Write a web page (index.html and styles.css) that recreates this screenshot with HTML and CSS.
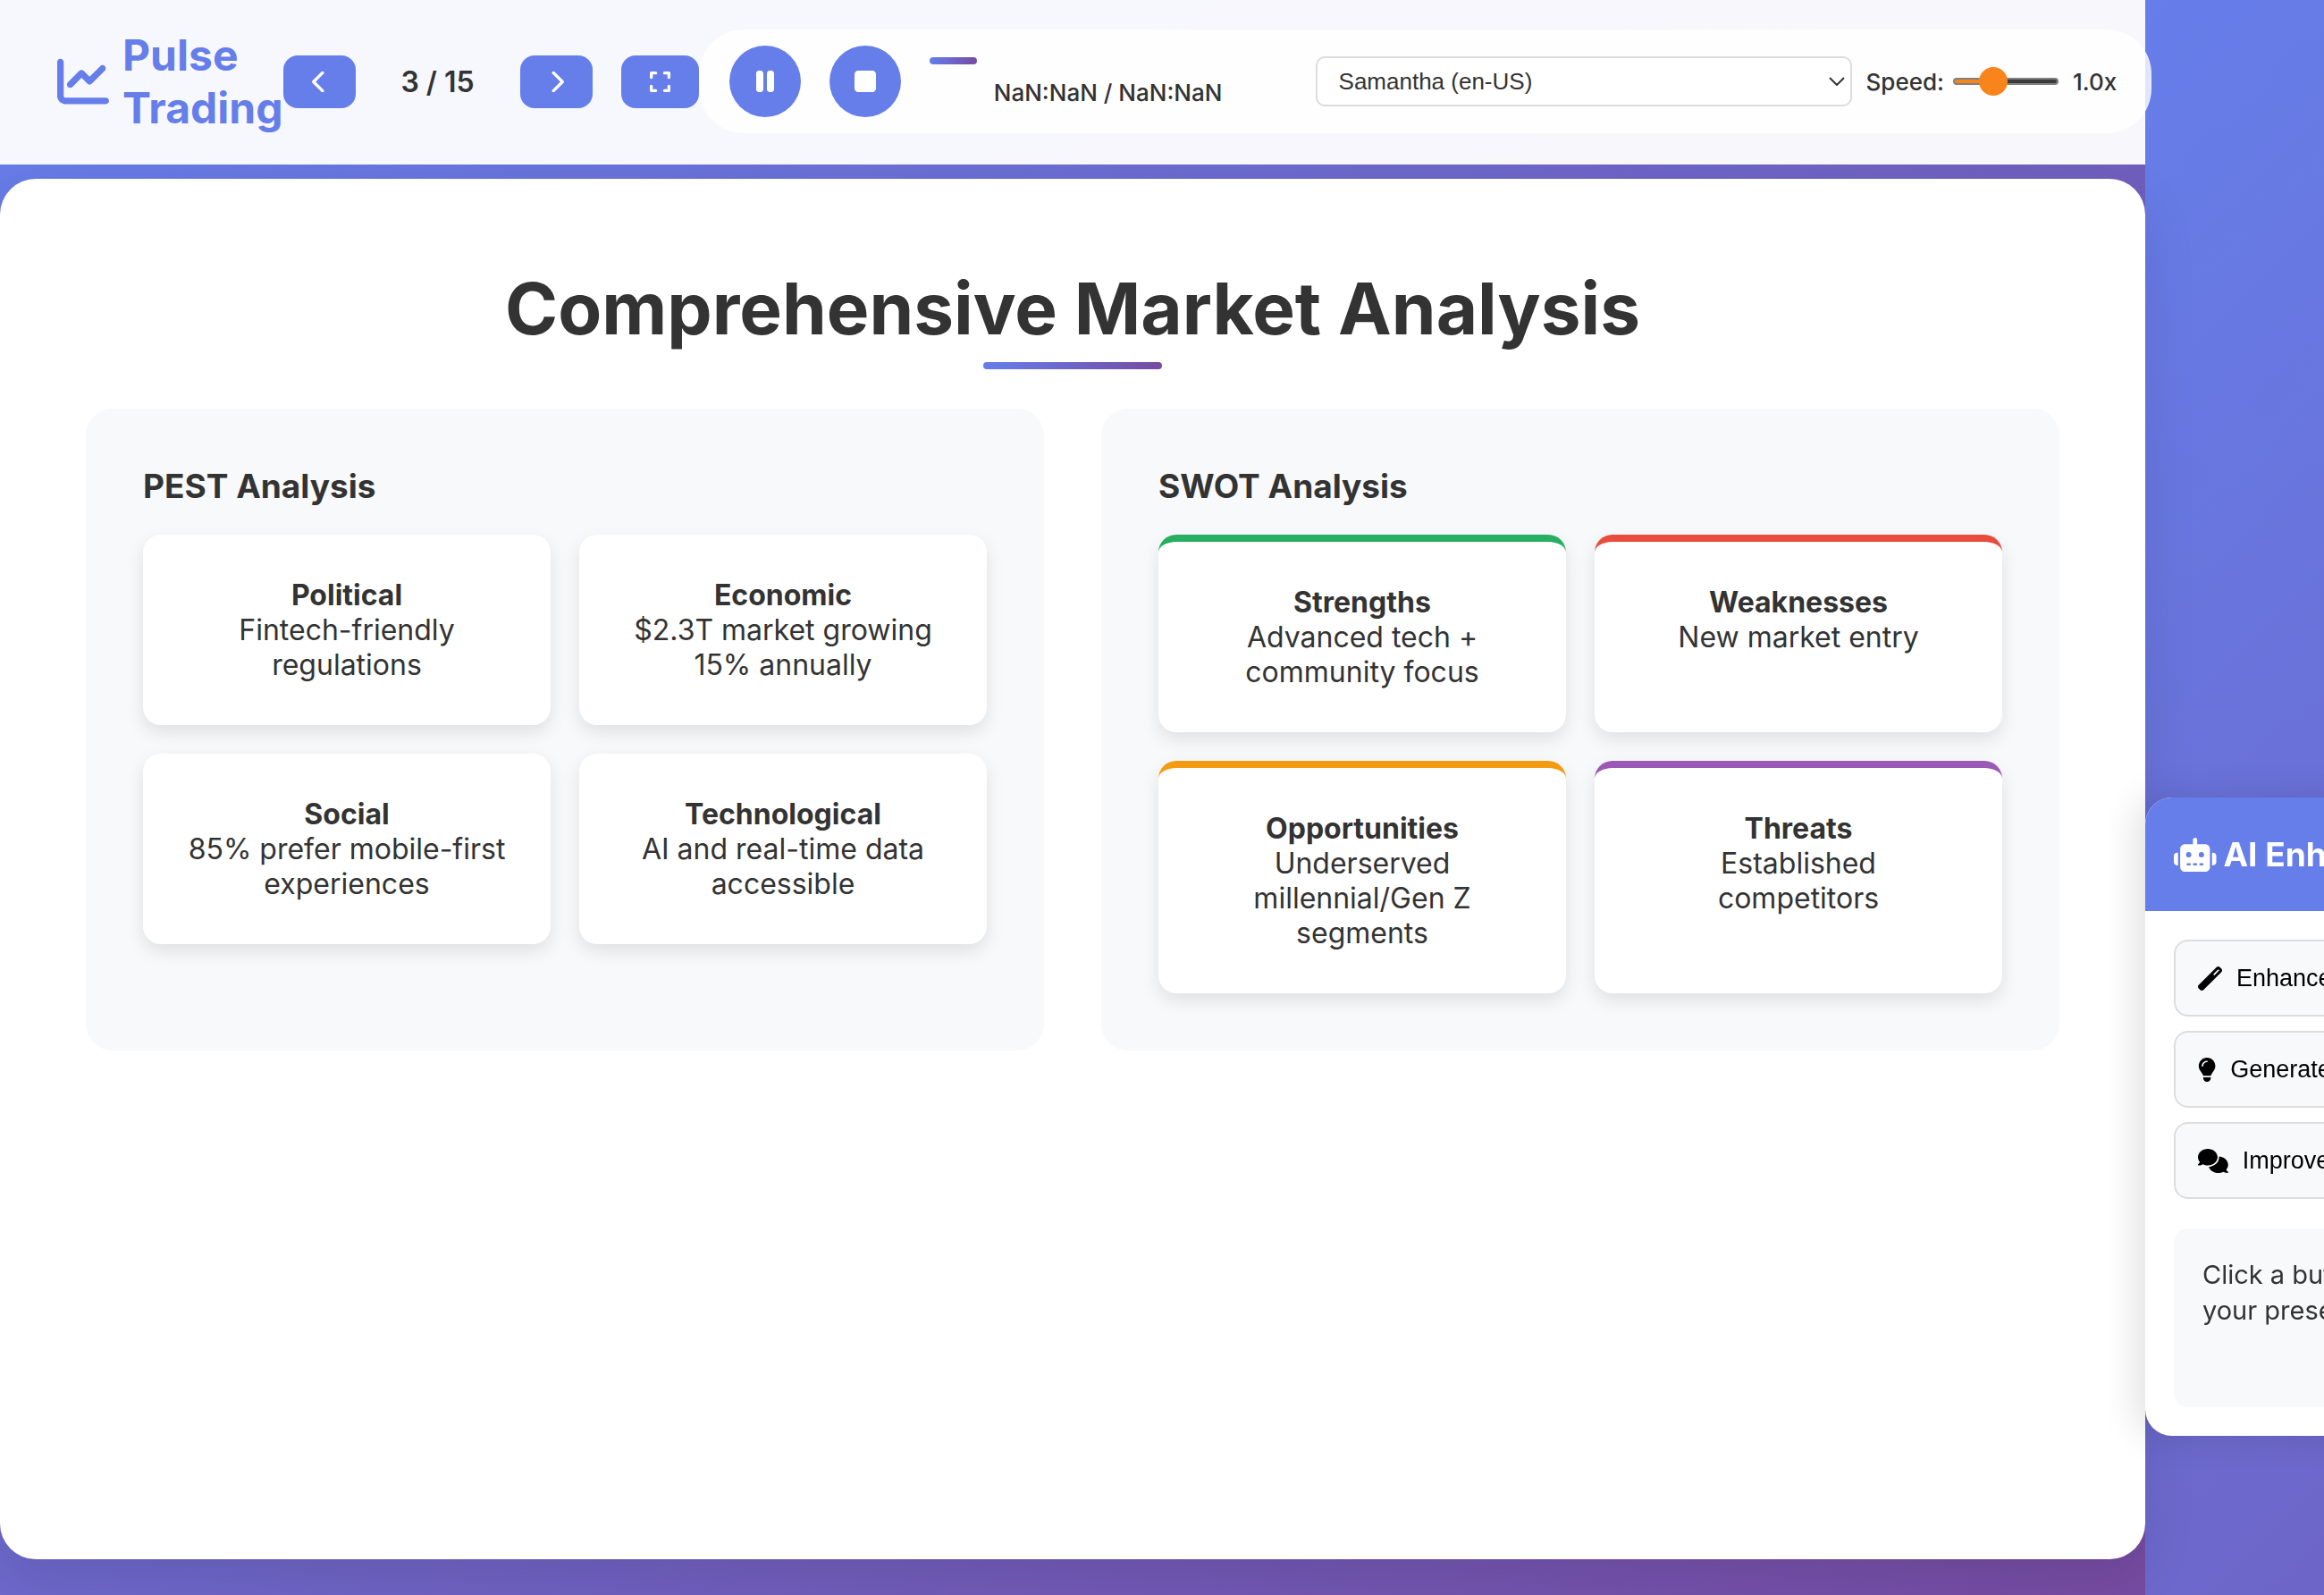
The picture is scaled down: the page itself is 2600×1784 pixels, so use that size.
FILE: index.html
```html
<!DOCTYPE html>
<html lang="en">
<head>
<meta charset="utf-8">
<title>Pulse Trading</title>
<link rel="stylesheet" href="styles.css">
</head>
<body>
<div class="app">
  <header class="topbar">
    <div class="logo">
      <svg class="logo-icon" viewBox="0 0 512 512" aria-hidden="true"><path d="M64 64c0-17.7-14.3-32-32-32S0 46.3 0 64V400c0 44.2 35.8 80 80 80H480c17.7 0 32-14.3 32-32s-14.3-32-32-32H80c-8.8 0-16-7.2-16-16V64zm406.6 86.6c12.5-12.5 12.5-32.8 0-45.3s-32.8-12.5-45.3 0L320 210.7l-57.4-57.4c-12.5-12.5-32.8-12.5-45.3 0l-112 112c-12.5 12.5-12.5 32.8 0 45.3s32.8 12.5 45.3 0L240 221.3l57.4 57.4c12.5 12.5 32.8 12.5 45.3 0l128-128z"/></svg>
      <span>Pulse Trading</span>
    </div>
    <nav class="slide-nav">
      <button class="nav-btn" type="button" aria-label="Previous slide"><svg class="icon icon-narrow" viewBox="0 0 320 512"><path d="M9.4 233.4c-12.5 12.5-12.5 32.8 0 45.3l192 192c12.5 12.5 32.8 12.5 45.3 0s12.5-32.8 0-45.3L77.3 256 246.6 86.6c12.5-12.5 12.5-32.8 0-45.3s-32.8-12.5-45.3 0l-192 192z"/></svg></button>
      <span class="counter">3 / 15</span>
      <button class="nav-btn" type="button" aria-label="Next slide"><svg class="icon icon-narrow" viewBox="0 0 320 512"><path d="M310.6 233.4c12.5 12.5 12.5 32.8 0 45.3l-192 192c-12.5 12.5-32.8 12.5-45.3 0s-12.5-32.8 0-45.3L242.7 256 73.4 86.6c-12.5-12.5-12.5-32.8 0-45.3s32.8-12.5 45.3 0l192 192z"/></svg></button>
      <button class="nav-btn" type="button" aria-label="Fullscreen"><svg class="icon icon-expand" viewBox="0 0 448 512"><path d="M32 32C14.3 32 0 46.3 0 64v96c0 17.7 14.3 32 32 32s32-14.3 32-32V96h64c17.7 0 32-14.3 32-32s-14.3-32-32-32H32zM64 352c0-17.7-14.3-32-32-32s-32 14.3-32 32v96c0 17.7 14.3 32 32 32h96c17.7 0 32-14.3 32-32s-14.3-32-32-32H64V352zM320 32c-17.7 0-32 14.3-32 32s14.3 32 32 32h64v64c0 17.7 14.3 32 32 32s32-14.3 32-32V64c0-17.7-14.3-32-32-32H320zM448 352c0-17.7-14.3-32-32-32s-32 14.3-32 32v64H320c-17.7 0-32 14.3-32 32s14.3 32 32 32h96c17.7 0 32-14.3 32-32V352z"/></svg></button>
    </nav>
    <div class="player">
      <button class="round-btn" type="button" aria-label="Pause"><svg class="icon-media" viewBox="0 0 320 512"><path d="M48 64C21.500 64 0 85.500 0 112V400c0 26.500 21.500 48 48 48H80c26.500 0 48-21.500 48-48V112c0-26.500-21.500-48-48-48H48zm192 0c-26.500 0-48 21.500-48 48V400c0 26.500 21.500 48 48 48h32c26.500 0 48-21.500 48-48V112c0-26.500-21.500-48-48-48H240z"/></svg></button>
      <button class="round-btn" type="button" aria-label="Stop"><svg class="icon-media" viewBox="0 0 384 512"><path d="M0 128C0 92.700 28.700 64 64 64H320c35.300 0 64 28.700 64 64V384c0 35.300-28.700 64-64 64H64c-35.300 0-64-28.700-64-64V128z"/></svg></button>
      <div class="progress">
        <div class="progress-track"><div class="progress-fill" style="width: 13.33%"></div></div>
        <div class="progress-time">NaN:NaN / NaN:NaN</div>
      </div>
      <div class="voice-group">
        <div class="voice">
          <select class="voice-select" aria-label="Voice"><option>Samantha (en-US)</option></select>
          <svg class="voice-arrow" viewBox="0 0 18 10" aria-hidden="true"><path d="M1 1l8 8 8-8"/></svg>
        </div>
        <label class="speed-text" for="speed">Speed:</label>
        <input class="speed" id="speed" type="range" min="0.5" max="2" step="0.1" value="1">
        <output class="speed-text speed-value" for="speed">1.0x</output>
      </div>
    </div>
  </header>
  <main class="slide">
    <h1 class="title">Comprehensive Market Analysis</h1>
    <div class="columns">
      <section class="panel">
        <h2 class="panel-title">PEST Analysis</h2>
        <div class="cards">
          <div class="card"><strong>Political</strong><br>Fintech-friendly regulations</div>
          <div class="card"><strong>Economic</strong><br>$2.3T market growing 15% annually</div>
          <div class="card"><strong>Social</strong><br>85% prefer mobile-first experiences</div>
          <div class="card"><strong>Technological</strong><br>AI and real-time data accessible</div>
        </div>
      </section>
      <section class="panel">
        <h2 class="panel-title">SWOT Analysis</h2>
        <div class="cards">
          <div class="card strengths"><strong>Strengths</strong><br>Advanced tech + community focus</div>
          <div class="card weaknesses"><strong>Weaknesses</strong><br>New market entry</div>
          <div class="card opportunities"><strong>Opportunities</strong><br>Underserved millennial/Gen Z segments</div>
          <div class="card threats"><strong>Threats</strong><br>Established competitors</div>
        </div>
      </section>
    </div>
  </main>
</div>
<aside class="assistant">
  <h2 class="assistant-head">
    <svg class="icon-robot" viewBox="0 0 640 512" aria-hidden="true"><path d="M320 0c17.7 0 32 14.3 32 32V96H472c39.8 0 72 32.2 72 72V440c0 39.8-32.2 72-72 72H168c-39.8 0-72-32.2-72-72V168c0-39.8 32.2-72 72-72H288V32c0-17.7 14.3-32 32-32zM208 384c-8.8 0-16 7.2-16 16s7.2 16 16 16h32c8.8 0 16-7.2 16-16s-7.2-16-16-16H208zm96 0c-8.8 0-16 7.2-16 16s7.2 16 16 16h32c8.8 0 16-7.2 16-16s-7.2-16-16-16H304zm96 0c-8.8 0-16 7.2-16 16s7.2 16 16 16h32c8.8 0 16-7.2 16-16s-7.2-16-16-16H400zM264 256a40 40 0 1 0 -80 0 40 40 0 1 0 80 0zm152 40a40 40 0 1 0 0-80 40 40 0 1 0 0 80zM48 224H64V416H48c-26.5 0-48-21.5-48-48V272c0-26.5 21.5-48 48-48zm544 0c26.5 0 48 21.5 48 48v96c0 26.5-21.5 48-48 48H576V224h16z"/></svg>
    <span>AI Enhancement</span>
  </h2>
  <div class="assistant-body">
    <div class="actions">
      <button class="action" type="button"><svg class="icon" viewBox="0 0 512 512"><path d="M14.1 463.3c-18.7-18.7-18.7-49.1 0-67.9L395.4 14.1c18.7-18.7 49.1-18.7 67.9 0l34.6 34.6c18.7 18.7 18.7 49.1 0 67.9L116.5 497.9c-18.7 18.7-49.1 18.7-67.9 0L14.1 463.3zM347.6 187.6l105-105L429.4 59.3l-105 105 23.3 23.3z"/></svg>Enhance Content</button>
      <button class="action" type="button"><svg class="icon" viewBox="0 0 384 512"><path d="M272 384c9.6-31.9 29.5-59.1 49.2-86.2l0 0c5.2-7.1 10.4-14.2 15.4-21.4c19.8-28.5 31.4-63 31.4-100.3C368 78.8 289.2 0 192 0S16 78.8 16 176c0 37.3 11.6 71.9 31.4 100.3c5 7.2 10.2 14.3 15.4 21.4l0 0c19.8 27.1 39.7 54.4 49.2 86.2H272zM192 512c44.2 0 80-35.8 80-80V416H112v16c0 44.2 35.8 80 80 80zM112 176c0 8.8-7.2 16-16 16s-16-7.2-16-16c0-61.9 50.1-112 112-112c8.8 0 16 7.2 16 16s-7.2 16-16 16c-44.2 0-80 35.8-80 80z"/></svg>Generate Ideas</button>
      <button class="action" type="button"><svg class="icon" viewBox="0 0 640 512"><path d="M208 352c114.900 0 208-78.800 208-176S322.900 0 208 0S0 78.800 0 176c0 38.600 14.700 74.300 39.600 103.400c-3.500 9.400-8.700 17.700-14.200 24.700c-4.800 6.200-9.700 11-13.300 14.300c-1.800 1.600-3.300 2.900-4.300 3.700c-.5 .4-.9 .7-1.100 .8l-.2 .2C1 327.200-1.400 334.400 .8 340.900S9.100 352 16 352c21.800 0 43.800-5.600 62.100-12.500c9.200-3.500 17.800-7.400 25.300-11.400C134.100 343.300 169.800 352 208 352zM448 176c0 112.300-99.100 196.900-216.500 207C255.800 457.400 336.400 512 432 512c38.200 0 73.900-8.700 104.700-23.900c7.500 4 16 7.900 25.200 11.400c18.300 6.900 40.300 12.500 62.100 12.500c6.900 0 13.100-4.500 15.200-11.100c2.100-6.600-.2-13.800-5.800-17.900l-.2-.2c-.2-.2-.6-.4-1.100-.8c-1-.8-2.500-2-4.300-3.700c-3.600-3.300-8.500-8.100-13.300-14.300c-5.500-7-10.700-15.400-14.200-24.700c24.900-29 39.600-64.700 39.600-103.400c0-92.800-84.900-168.900-192.600-175.500c.4 5.100 .6 10.300 .6 15.500z"/></svg>Improve Script</button>
    </div>
    <p class="result">Click a button above to enhance your presentation</p>
  </div>
</aside>
</body>
</html>
```
FILE: styles.css
```css
:root {
  --side: 200px;
  --blue: #667eea;
  --violet: #764ba2;
  --ink: #333;
  --soft: #f8f9fb;
}

* {
  box-sizing: border-box;
  margin: 0;
  padding: 0;
}

body {
  min-height: 100vh;
  overflow: hidden;
  color: var(--ink);
  font-family: Inter, "Liberation Sans", sans-serif;
  background: linear-gradient(135deg, var(--blue), var(--violet)) 0 0 / calc(100% - var(--side)) 100%;
}

svg {
  display: block;
  flex: none;
  fill: currentColor;
}

button {
  cursor: pointer;
}

.app {
  display: flex;
  flex-direction: column;
  gap: 16px;
  min-height: 100vh;
  margin-right: var(--side);
  padding-bottom: 40px;
}

/* Top bar */
.topbar {
  position: relative;
  display: flex;
  align-items: center;
  justify-content: space-between;
  padding: 32px 64px 34px;
  background: rgba(255, 255, 255, 0.95);
}

.logo {
  display: flex;
  flex: 0 1 0;
  align-items: center;
  gap: 15px;
  color: var(--blue);
  font-size: 48px;
  font-weight: 700;
  line-height: 59px;
}

.logo-icon {
  width: 58px;
  height: 58px;
}

.slide-nav {
  display: flex;
  flex: none;
  align-items: center;
  gap: 32px;
}

.nav-btn {
  padding: 16px 32px;
  border: 0;
  border-radius: 16px;
  color: #fff;
  background: var(--blue);
}

.icon {
  height: 27px;
}

.icon-narrow {
  width: 17px;
}

.icon-expand {
  width: 23px;
}

.counter {
  min-width: 120px;
  font-size: 32px;
  font-weight: 600;
  text-align: center;
}

.player {
  display: flex;
  flex: none;
  align-items: center;
  gap: 32px;
  padding: 16px 32px;
  border: 2px solid rgba(255, 255, 255, 0.2);
  border-radius: 50px;
  background: rgba(255, 255, 255, 0.8);
}

.round-btn {
  display: flex;
  align-items: center;
  justify-content: center;
  width: 80px;
  height: 80px;
  border: 0;
  border-radius: 50%;
  color: #fff;
  background: var(--blue);
}

.icon-media {
  height: 32px;
}

.progress {
  display: flex;
  flex-direction: column;
  gap: 16px;
  width: 400px;
}

.progress-track {
  height: 8px;
  border-radius: 4px;
  background: rgba(255, 255, 255, 0.2);
}

.progress-fill {
  height: 100%;
  border-radius: 4px;
  background: linear-gradient(90deg, var(--blue), var(--violet));
}

.progress-time {
  font-size: 26px;
  font-weight: 500;
  line-height: 31px;
  text-align: center;
}

.voice-group {
  display: flex;
  align-items: center;
  gap: 16px;
}

.voice {
  position: relative;
}

.voice-select {
  display: block;
  width: 600px;
  height: 56px;
  padding: 0 24px;
  border: 2px solid #ddd;
  border-radius: 10px;
  color: var(--ink);
  background: #fff;
  font-family: "Liberation Sans", Arial, sans-serif;
  font-size: 26px;
  appearance: none;
}

.voice-arrow {
  position: absolute;
  top: 23px;
  right: 8px;
  width: 18px;
  height: 10px;
  fill: none;
  stroke: var(--ink);
  stroke-width: 2;
  pointer-events: none;
}

.speed-text {
  font-size: 26px;
  font-weight: 500;
}

.speed-value {
  min-width: 54px;
}

.speed {
  width: 118px;
  height: 32px;
  margin-left: -6px;
  background: none;
  appearance: none;
}

.speed::-webkit-slider-runnable-track {
  height: 8px;
  border: 2px solid #808080;
  border-radius: 4px;
  background: linear-gradient(90deg, #fa841c 36%, #3b3b3b 36%);
}

.speed::-webkit-slider-thumb {
  width: 32px;
  height: 32px;
  margin-top: -14px;
  border-radius: 50%;
  background: #fa841c;
  appearance: none;
}

/* Slide */
.slide {
  flex: 1;
  padding: 96px;
  border-radius: 40px;
  background: #fff;
  box-shadow: 0 20px 60px rgba(0, 0, 0, 0.1);
}

.title {
  position: relative;
  margin-bottom: 64px;
  font-size: 80px;
  font-weight: 700;
  line-height: 97px;
  text-align: center;
}

.title::after {
  content: "";
  position: absolute;
  bottom: -20px;
  left: calc(50% - 100px);
  width: 200px;
  height: 8px;
  border-radius: 4px;
  background: linear-gradient(90deg, var(--blue), var(--violet));
}

.columns {
  display: grid;
  grid-template-columns: 1fr 1fr;
  gap: 64px;
}

.panel {
  padding: 64px;
  border-radius: 30px;
  background: var(--soft);
}

.panel-title {
  margin-bottom: 32px;
  font-size: 37px;
  font-weight: 700;
  line-height: 45px;
}

.cards {
  display: grid;
  grid-template-columns: 1fr 1fr;
  gap: 32px;
}

.card {
  padding: 48px;
  border-radius: 20px;
  background: #fff;
  box-shadow: 0 8px 20px rgba(0, 0, 0, 0.1);
  font-size: 32px;
  line-height: 39px;
  text-align: center;
}

.strengths {
  border-top: 8px solid #27ae60;
}

.weaknesses {
  border-top: 8px solid #e74c3c;
}

.opportunities {
  border-top: 8px solid #f39c12;
}

.threats {
  border-top: 8px solid #9b59b6;
}

/* Assistant drawer, partly off the right edge */
.assistant {
  position: fixed;
  top: 50%;
  left: calc(100% - var(--side));
  width: 600px;
  overflow: hidden;
  border-radius: 30px;
  background: #fff;
  box-shadow: -10px 0 40px rgba(0, 0, 0, 0.12);
}

.assistant-head {
  display: flex;
  align-items: center;
  gap: 8px;
  padding: 41px 32px;
  color: #fff;
  background: var(--blue);
  font-size: 37px;
  font-weight: 700;
  line-height: 45px;
}

.icon-robot {
  height: 38px;
}

.assistant-body {
  padding: 32px;
}

.actions {
  display: flex;
  flex-direction: column;
  gap: 16px;
  margin-bottom: 33px;
}

.action {
  display: flex;
  align-items: center;
  gap: 16px;
  padding: 26px 25px;
  border: 2px solid #ddd;
  border-radius: 16px;
  color: #000;
  background: var(--soft);
  font-family: "Liberation Sans", Arial, sans-serif;
  font-size: 27px;
  line-height: 30px;
}

.result {
  min-height: 200px;
  padding: 32px;
  border-radius: 16px;
  background: var(--soft);
  font-size: 29px;
  line-height: 40px;
}
```
